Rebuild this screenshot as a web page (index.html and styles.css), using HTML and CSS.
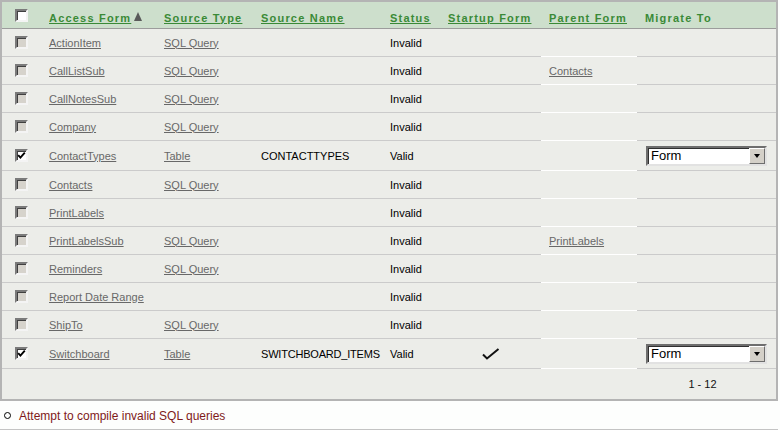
FILE: index.html
```html
<!DOCTYPE html>
<html>
<head>
<meta charset="utf-8">
<link rel="stylesheet" href="styles.css">
</head>
<body>
<div class="panel">
  <div class="row head">
    <div class="c cb-cell"><span class="cb white"></span></div>
    <div class="c"><a class="hl" href="#">Access Form</a><svg class="sort" width="8" height="9" viewBox="0 0 8 9"><polygon points="4,0 8,9 0,9" fill="#5a5a5a"/></svg></div>
    <div class="c"><a class="hl" href="#">Source Type</a></div>
    <div class="c"><a class="hl" href="#">Source Name</a></div>
    <div class="c"><a class="hl" href="#">Status</a></div>
    <div class="c"><a class="hl" href="#">Startup Form</a></div>
    <div class="c pf"><a class="hl" href="#">Parent Form</a></div>
    <div class="c"><span class="ht">Migrate To</span></div>
  </div>

  <div class="row"><div class="c cb-cell"><span class="cb"></span></div><div class="c"><a href="#">ActionItem</a></div><div class="c"><a href="#">SQL Query</a></div><div class="c"></div><div class="c">Invalid</div><div class="c"></div><div class="c pf"></div><div class="c"></div></div>
  <div class="row"><div class="c cb-cell"><span class="cb"></span></div><div class="c"><a href="#">CallListSub</a></div><div class="c"><a href="#">SQL Query</a></div><div class="c"></div><div class="c">Invalid</div><div class="c"></div><div class="c pf"><a href="#">Contacts</a></div><div class="c"></div></div>
  <div class="row"><div class="c cb-cell"><span class="cb"></span></div><div class="c"><a href="#">CallNotesSub</a></div><div class="c"><a href="#">SQL Query</a></div><div class="c"></div><div class="c">Invalid</div><div class="c"></div><div class="c pf"></div><div class="c"></div></div>
  <div class="row"><div class="c cb-cell"><span class="cb"></span></div><div class="c"><a href="#">Company</a></div><div class="c"><a href="#">SQL Query</a></div><div class="c"></div><div class="c">Invalid</div><div class="c"></div><div class="c pf"></div><div class="c"></div></div>
  <div class="row tall"><div class="c cb-cell"><span class="cb white"><svg width="9" height="9" viewBox="0 0 9 9"><polyline points="1.2,4.2 3.4,6.6 7.8,1.6" fill="none" stroke="#000" stroke-width="1.9"/></svg></span></div><div class="c"><a href="#">ContactTypes</a></div><div class="c"><a href="#">Table</a></div><div class="c">CONTACTTYPES</div><div class="c">Valid</div><div class="c"></div><div class="c pf"></div><div class="c"><div class="sel"><span class="sel-t">Form</span><span class="sel-b"><span class="tri"></span></span></div></div></div>
  <div class="row"><div class="c cb-cell"><span class="cb"></span></div><div class="c"><a href="#">Contacts</a></div><div class="c"><a href="#">SQL Query</a></div><div class="c"></div><div class="c">Invalid</div><div class="c"></div><div class="c pf"></div><div class="c"></div></div>
  <div class="row"><div class="c cb-cell"><span class="cb"></span></div><div class="c"><a href="#">PrintLabels</a></div><div class="c"></div><div class="c"></div><div class="c">Invalid</div><div class="c"></div><div class="c pf"></div><div class="c"></div></div>
  <div class="row"><div class="c cb-cell"><span class="cb"></span></div><div class="c"><a href="#">PrintLabelsSub</a></div><div class="c"><a href="#">SQL Query</a></div><div class="c"></div><div class="c">Invalid</div><div class="c"></div><div class="c pf"><a href="#">PrintLabels</a></div><div class="c"></div></div>
  <div class="row"><div class="c cb-cell"><span class="cb"></span></div><div class="c"><a href="#">Reminders</a></div><div class="c"><a href="#">SQL Query</a></div><div class="c"></div><div class="c">Invalid</div><div class="c"></div><div class="c pf"></div><div class="c"></div></div>
  <div class="row"><div class="c cb-cell"><span class="cb"></span></div><div class="c"><a href="#">Report Date Range</a></div><div class="c"></div><div class="c"></div><div class="c">Invalid</div><div class="c"></div><div class="c pf"></div><div class="c"></div></div>
  <div class="row"><div class="c cb-cell"><span class="cb"></span></div><div class="c"><a href="#">ShipTo</a></div><div class="c"><a href="#">SQL Query</a></div><div class="c"></div><div class="c">Invalid</div><div class="c"></div><div class="c pf"></div><div class="c"></div></div>
  <div class="row tall"><div class="c cb-cell"><span class="cb white"><svg width="9" height="9" viewBox="0 0 9 9"><polyline points="1.2,4.2 3.4,6.6 7.8,1.6" fill="none" stroke="#000" stroke-width="1.9"/></svg></span></div><div class="c"><a href="#">Switchboard</a></div><div class="c"><a href="#">Table</a></div><div class="c"><span class="narrow">SWITCHBOARD_ITEMS</span></div><div class="c">Valid</div><div class="c center"><svg width="18" height="12" viewBox="0 0 18 12"><path d="M1 6.5 L5 10.5 L16.5 1" fill="none" stroke="#111" stroke-width="2"/></svg></div><div class="c pf"></div><div class="c"><div class="sel"><span class="sel-t">Form</span><span class="sel-b"><span class="tri"></span></span></div></div></div>

  <div class="foot"><span class="pager">1 - 12</span></div>
</div>
<div class="msg"><span class="bullet"></span><span class="msg-t">Attempt to compile invalid SQL queries</span></div>
</body>
</html>
```

FILE: styles.css
```css
html, body {
  margin: 0;
  padding: 0;
  background: #fdfefd;
}
body {
  font-family: "Liberation Sans", Arial, sans-serif;
  font-size: 11px;
  color: #000;
}
.panel {
  width: 774px;
  border: 2px solid #b4b4b4;
  background: #ecede9;
}
.row {
  display: grid;
  grid-template-columns: 39px 115px 97px 129px 58px 101px 96px 139px;
}
.c {
  height: 27px;
  border-bottom: 1px solid #cbcbcb;
  display: flex;
  align-items: center;
  padding: 0 0 0 8px;
  box-sizing: content-box;
  white-space: nowrap;
  overflow: visible;
}
.row .c.pf { border-bottom-color: #ffffff; }
.tall .c { height: 29px; }
.c.center { justify-content: center; padding-left: 0; }
.cb-cell { justify-content: center; padding-left: 0 !important; }
.narrow { letter-spacing: -0.2px; }
.head { background: #cddfcc; }
.head .c {
  height: 26px;
  border-bottom: 1px solid #9c9c9c;
}
.head .c:not(.cb-cell) { height: 21px; padding-top: 5px; }
.head .c.pf { border-bottom-color: #9c9c9c; }
a {
  color: #686868;
  text-decoration: underline;
}
.hl, .ht {
  color: #3a8a37;
  font-weight: bold;
  letter-spacing: 1.2px;
}
.ht { text-decoration: none; }
.sort { margin-left: 3px; margin-top: -3px; }
.cb {
  width: 9px;
  height: 9px;
  display: flex;
  align-items: center;
  justify-content: center;
  border-style: solid;
  border-width: 2px;
  border-color: #7a7a7a #f4f4f4 #f4f4f4 #7a7a7a;
  background: #d6d3cc;
  box-shadow: inset 1px 1px 0 #404040;
}
.cb.white { background: #ffffff; }
.cb svg { display: block; }
.sel {
  width: 117px;
  height: 16px;
  border-style: solid;
  border-width: 2px;
  border-color: #6e6e6e #e2e2e2 #e2e2e2 #6e6e6e;
  box-shadow: inset 1px 1px 0 #303030;
  background: #ffffff;
  display: flex;
  align-items: center;
  margin-left: 1px;
}
.sel-t {
  flex: 1;
  font-size: 13px;
  padding-left: 3px;
  color: #000;
}
.sel-b {
  width: 14px;
  height: 14px;
  background: #d4d0c8;
  border-style: solid;
  border-width: 1px;
  border-color: #ffffff #6e6e6e #6e6e6e #ffffff;
  display: flex;
  align-items: center;
  justify-content: center;
}
.tri {
  width: 0;
  height: 0;
  border-left: 3.5px solid transparent;
  border-right: 3.5px solid transparent;
  border-top: 4px solid #000;
  margin-top: 1px;
}
.foot {
  height: 30px;
  display: flex;
  align-items: center;
  justify-content: flex-end;
}
.pager {
  width: 131px;
  text-align: center;
  padding-right: 8px;
  color: #111;
}
.msg {
  height: 27px;
  border-bottom: 1px solid #c4c4c4;
  border-top: 1px solid #fdfefd;
  display: flex;
  align-items: center;
  width: 778px;
}
.bullet {
  width: 5px;
  height: 5px;
  border: 1px solid #000;
  border-radius: 50%;
  margin-left: 4px;
  margin-right: 8px;
}
.msg-t {
  font-size: 12px;
  color: #7f1a1a;
}
```
